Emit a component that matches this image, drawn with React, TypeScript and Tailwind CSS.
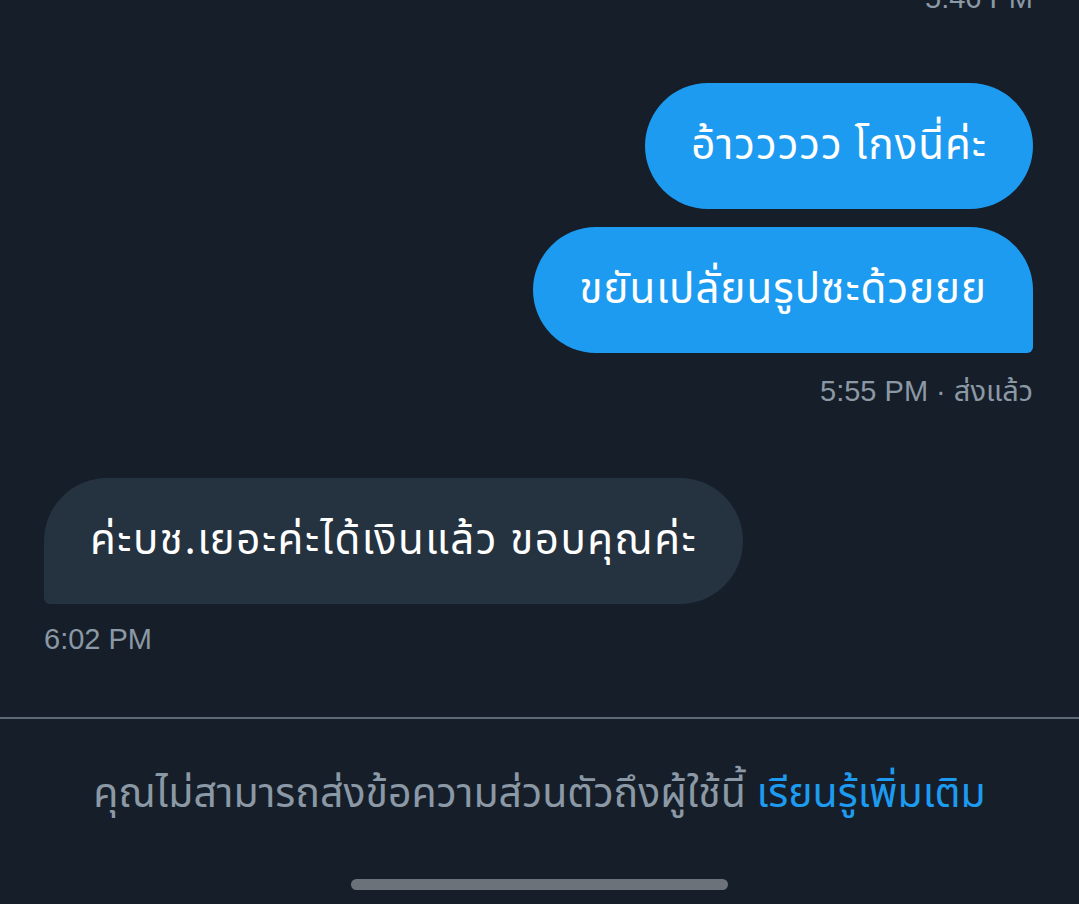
import React from "react";

const thai = { fontFamily: '"Noto Sans Thai", "Noto Sans", Roboto, "Liberation Sans", sans-serif' };
const stamp = { fontFamily: '"Liberation Sans", "Noto Sans Thai", "Noto Sans", sans-serif' };

const Sent = ({ text, last }: { text: string; last?: boolean }) => (
  <div className="flex justify-end">
    <div
      className={`flex h-[126px] items-center bg-[#1d9bf0] px-[46px] text-[42px] tracking-[1px] text-white ${
        last ? "rounded-[63px] rounded-br-[6px]" : "rounded-[63px]"
      }`}
    >
      {text}
    </div>
  </div>
);

export default function App() {
  return (
    <div className="flex h-[904px] w-full flex-col overflow-hidden bg-[#161f29]" style={thai}>
      <div className="flex shrink-0 flex-col pl-[44px] pr-[46px]">
        <div className="-mt-[15px] h-[27px] text-right text-[29px] leading-[27px] text-[#8b98a5]" style={stamp}>
          5:46 PM
        </div>

        <div className="mt-[71px] flex flex-col gap-[18px]">
          <Sent text="อ้าววววว โกงนี่ค่ะ" />
          <Sent text="ขยันเปลั่ยนรูปซะด้วยยย" last />
        </div>
        <div className="mt-[24px] text-right text-[29px] leading-[28px] text-[#8b98a5]" style={stamp}>
          5:55 PM · ส่งแล้ว
        </div>

        <div className="mt-[73px] flex">
          <div className="flex h-[126px] items-center rounded-[63px] rounded-bl-[6px] bg-[#253240] px-[46px] text-[42px] tracking-[1.5px] text-white">
            ค่ะบช.เยอะค่ะได้เงินแล้ว ขอบคุณค่ะ
          </div>
        </div>
        <div className="mt-[21px] text-[29px] leading-[28px] text-[#8b98a5]" style={stamp}>
          6:02 PM
        </div>
      </div>

      <div className="mt-[64px] h-[2px] w-full shrink-0 bg-[#5e6a75]" />

      <div className="flex flex-1 flex-col items-center">
        <p className="mt-[51px] whitespace-nowrap text-[41px] leading-[48px] text-[#8b98a5]">
          คุณไม่สามารถส่งข้อความส่วนตัวถึงผู้ใช้นี้ <span className="text-[#1d9bf0]">เรียนรู้เพิ่มเติม</span>
        </p>
        <div className="mt-[61px] h-[11px] w-[377px] shrink-0 rounded-full bg-[#6b7279]" />
      </div>
    </div>
  );
}
